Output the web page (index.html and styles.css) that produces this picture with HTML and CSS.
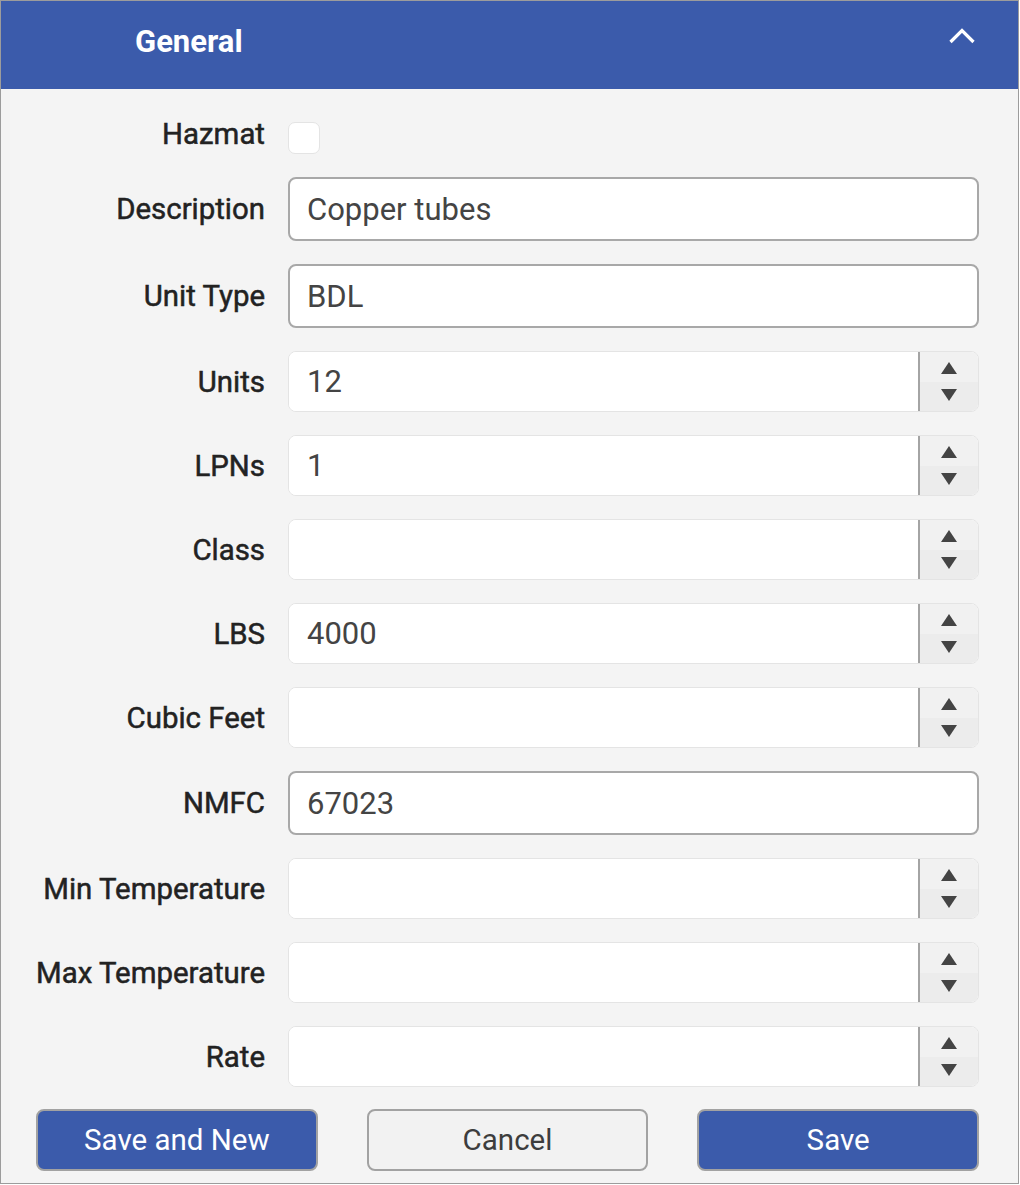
FILE: index.html
```html
<!DOCTYPE html>
<html lang="en">
<head>
    <meta charset="UTF-8">
    <meta name="viewport" content="width=device-width, initial-scale=1.0">
    <title>Item - General</title>
    <link rel="stylesheet" href="styles.css">
</head>
<body>

    <div class="panel">
        <div class="panel-header">
            <span class="panel-title">General</span>
            <!-- collapse toggle -->
            <svg class="chevron" width="30" height="20" viewBox="0 0 30 20">
                <polyline points="3.5,15 15,3.5 26.5,15" fill="none" stroke="#fff" stroke-width="3.2"/>
            </svg>
        </div>

        <form class="item-form">
            <label class="label label-short" for="hazmat">Hazmat</label>
            <div><input type="checkbox" id="hazmat" class="check"></div>

            <label class="label" for="description">Description</label>
            <input type="text" id="description" class="field" value="Copper tubes">

            <label class="label" for="unitType">Unit Type</label>
            <input type="text" id="unitType" class="field" value="BDL">

            <label class="label" for="units">Units</label>
            <div class="number">
                <input type="text" id="units" value="12">
                <div class="spinner"><span class="up"></span><span class="down"></span></div>
            </div>

            <label class="label" for="lpns">LPNs</label>
            <div class="number">
                <input type="text" id="lpns" value="1">
                <div class="spinner"><span class="up"></span><span class="down"></span></div>
            </div>

            <label class="label" for="class">Class</label>
            <div class="number">
                <input type="text" id="class" value="">
                <div class="spinner"><span class="up"></span><span class="down"></span></div>
            </div>

            <label class="label" for="lbs">LBS</label>
            <div class="number">
                <input type="text" id="lbs" value="4000">
                <div class="spinner"><span class="up"></span><span class="down"></span></div>
            </div>

            <label class="label" for="cubicFeet">Cubic Feet</label>
            <div class="number">
                <input type="text" id="cubicFeet" value="">
                <div class="spinner"><span class="up"></span><span class="down"></span></div>
            </div>

            <label class="label" for="nmfc">NMFC</label>
            <input type="text" id="nmfc" class="field" value="67023">

            <label class="label" for="minTemp">Min Temperature</label>
            <div class="number">
                <input type="text" id="minTemp" value="">
                <div class="spinner"><span class="up"></span><span class="down"></span></div>
            </div>

            <label class="label" for="maxTemp">Max Temperature</label>
            <div class="number">
                <input type="text" id="maxTemp" value="">
                <div class="spinner"><span class="up"></span><span class="down"></span></div>
            </div>

            <label class="label" for="rate">Rate</label>
            <div class="number">
                <input type="text" id="rate" value="">
                <div class="spinner"><span class="up"></span><span class="down"></span></div>
            </div>
        </form>

        <div class="actions">
            <button type="button" class="btn btn-primary">Save and New</button>
            <button type="button" class="btn btn-default">Cancel</button>
            <button type="button" class="btn btn-primary">Save</button>
        </div>
    </div>

</body>
</html>
```

FILE: styles.css
```css
* {
    margin: 0;
    padding: 0;
    box-sizing: border-box;
    font-family: Roboto, "Liberation Sans", sans-serif;
}
body {
    background: #fff;
}
.panel {
    width: 1019px;
    height: 1184px;
    border: 1px solid #9c9c9c;
    background: #f4f4f4;
}
.panel-header {
    height: 88px;
    background: #3b5bab;
    color: white;
    display: flex;
    align-items: center;
    justify-content: space-between;
    padding: 0 41px 0 134px;
}
.panel-title {
    font-size: 31px;
    font-weight: bold;
    margin-top: -8px;
}
.chevron {
    margin-top: -16px;
}
.item-form {
    display: grid;
    grid-template-columns: 229px 1fr;
    column-gap: 23px;
    row-gap: 23px;
    align-items: center;
    padding: 33px 39px 0 35px;
}
/* regular face with a light stroke, reads as medium weight */
.label {
    text-align: right;
    white-space: nowrap;
    font-size: 29.4px;
    font-weight: 400;
    color: #222;
    -webkit-text-stroke: 0.5px #222;
    line-height: 32px;
}
.label-short {
    align-self: start;
    line-height: 24px;
}
.check {
    appearance: none;
    display: block;
    width: 32px;
    height: 32px;
    border: 1px solid #e4e4e4;
    border-radius: 7px;
    background: white;
}
.field {
    height: 64px;
    border: 2px solid #a8a8a8;
    border-radius: 8px;
    background: white;
    padding: 0 17px;
    font-size: 31px;
    color: #444;
}
.field:focus,
.number input:focus {
    outline: none;
}
.number {
    display: flex;
    height: 61px;
    border: 1px solid #e4e4e4;
    border-radius: 8px;
    background: white;
    overflow: hidden;
}
.number input {
    flex: 1;
    min-width: 0;
    border: none;
    border-right: 2px solid #a4a4a4;
    padding: 0 18px;
    font-size: 31px;
    color: #444;
    background: white;
}
.spinner {
    width: 58px;
    display: flex;
    flex-direction: column;
}
.spinner span {
    flex: 1;
    display: flex;
    align-items: center;
    justify-content: center;
}
.spinner .up {
    background: #f1f1f1;
}
.spinner .down {
    background: #ececec;
}
.spinner .up::after,
.spinner .down::after {
    content: "";
    border-left: 8px solid transparent;
    border-right: 8px solid transparent;
}
.spinner .up::after {
    border-bottom: 12px solid #444;
    margin-top: 3px;
}
.spinner .down::after {
    border-top: 12px solid #444;
    margin-bottom: 3px;
}
.actions {
    display: grid;
    grid-template-columns: repeat(3, 1fr);
    column-gap: 49px;
    padding: 22px 39px 0 35px;
}
.btn {
    height: 62px;
    border: 2px solid #a2a2a2;
    border-radius: 8px;
    font-size: 29.5px;
    cursor: pointer;
}
.btn-primary {
    background: #3b5bab;
    color: white;
}
.btn-default {
    background: #f2f2f2;
    color: #3d3d3d;
}
```
